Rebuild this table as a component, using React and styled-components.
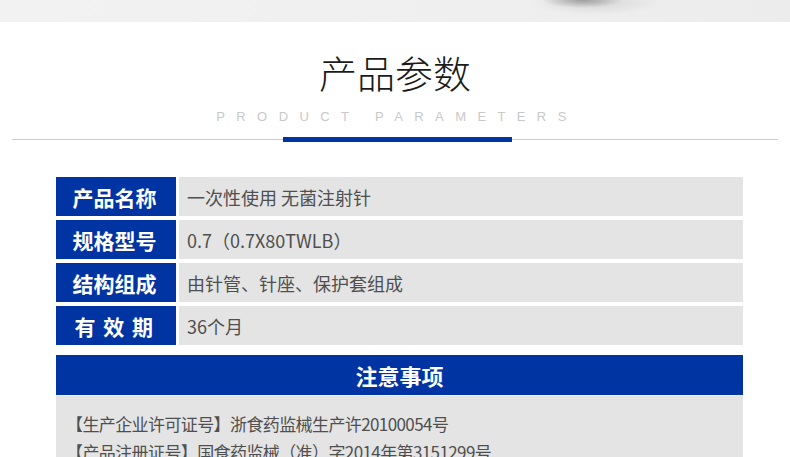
import styled, { createGlobalStyle } from 'styled-components';

const Global = createGlobalStyle`
    * {
        box-sizing: border-box;
    }
    body {
        margin: 0;
        background: #fff;
        font-family: "Noto Sans CJK SC", "Noto Sans", sans-serif;
    }
`;

const BLUE = '#0034a3';
const GREY = '#e4e4e4';

const specs = [
    { label: '产品名称', value: '一次性使用 无菌注射针' },
    { label: '规格型号', value: '0.7（0.7X80TWLB）' },
    { label: '结构组成', value: '由针管、针座、保护套组成' },
    { label: '有 效 期', value: '36个月', spaced: true },
];

const notes = [
    '【生产企业许可证号】浙食药监械生产许20100054号',
    '【产品注册证号】国食药监械（准）字2014年第3151299号',
];

export default function App() {
    return (
        <Page>
            <Global />
            <TopStrip />
            <Header>
                <Title>产品参数</Title>
                <Subtitle>PRODUCT PARAMETERS</Subtitle>
                <Divider>
                    <Bar />
                </Divider>
            </Header>
            <Table>
                {specs.map((s) => (
                    <Row key={s.label}>
                        <Label $spaced={s.spaced}>{s.label}</Label>
                        <Value>{s.value}</Value>
                    </Row>
                ))}
            </Table>
            <Notice>
                <NoticeHead>注意事项</NoticeHead>
                <NoticeBody>
                    {notes.map((n) => (
                        <p key={n}>{n}</p>
                    ))}
                </NoticeBody>
            </Notice>
        </Page>
    );
}

const Page = styled.div`
    width: 790px;
    height: 457px;
    overflow: hidden;
`;

const TopStrip = styled.div`
    height: 22px;
    background:
        radial-gradient(ellipse 40px 8px at 582px 0px, rgba(110, 110, 110, 0.55), rgba(200, 200, 200, 0) 100%),
        radial-gradient(ellipse 64px 13px at 596px 2px, rgba(170, 170, 170, 0.35), rgba(230, 230, 230, 0) 100%),
        linear-gradient(to right, #f2f2f2, #efefef 60%, #ececec);
`;

const Header = styled.div`
    padding-top: 31px;
    display: flex;
    flex-direction: column;
    align-items: center;
`;

const Title = styled.h1`
    margin: 0;
    font-size: 38px;
    line-height: 38px;
    font-weight: 200;
    color: #1a1a1a;
`;

const Subtitle = styled.div`
    margin-top: 19px;
    font-family: "Liberation Sans", Arial, sans-serif;
    font-size: 13px;
    line-height: 14px;
    letter-spacing: 11.4px;
    color: #c9c9c9;
    padding-left: 4px;
`;

const Divider = styled.div`
    align-self: stretch;
    margin: 13px 12px 0;
    height: 5px;
    background: linear-gradient(to bottom, transparent 2px, #cccccc 2px, #cccccc 3px, transparent 3px);
`;

const Bar = styled.div`
    width: 229px;
    height: 5px;
    margin-left: 271px;
    background: ${BLUE};
`;

const Table = styled.div`
    margin: 35px 0 0 56px;
    width: 687px;
    display: flex;
    flex-direction: column;
    gap: 4px;
`;

const Row = styled.div`
    display: grid;
    grid-template-columns: 120px 1fr;
    column-gap: 3px;
    height: 39px;
`;

const Label = styled.div`
    background: ${BLUE};
    color: #fff;
    font-size: 21px;
    font-weight: 700;
    display: flex;
    align-items: center;
    justify-content: center;
    white-space: pre;
    letter-spacing: ${(p) => (p.$spaced ? '1.5px' : '0')};
    padding-right: 3px;
`;

const Value = styled.div`
    background: ${GREY};
    color: #4f4f4f;
    font-size: 18px;
    display: flex;
    align-items: center;
    padding-left: 8px;
`;

const Notice = styled.div`
    margin: 10px 0 0 56px;
    width: 687px;
`;

const NoticeHead = styled.div`
    height: 40px;
    background: ${BLUE};
    color: #fff;
    font-size: 22px;
    font-weight: 700;
    display: flex;
    align-items: center;
    justify-content: center;
    border-bottom: 1px solid #eef0f6;
    box-sizing: content-box;
`;

const NoticeBody = styled.div`
    background: ${GREY};
    padding: 14px 10px 20px 10px;
    color: #4f4f4f;
    font-size: 17px;
    letter-spacing: -0.6px;
    line-height: 28px;

    p {
        margin: 0;
    }
`;
